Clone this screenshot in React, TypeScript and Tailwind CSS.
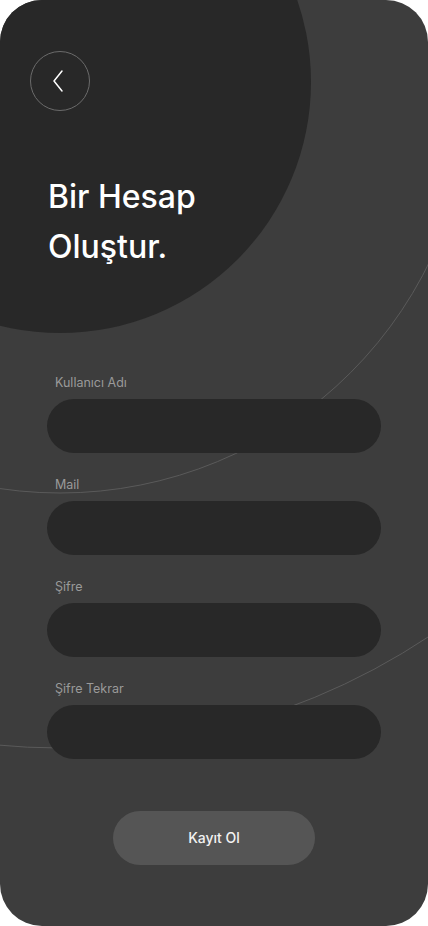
import { useState } from 'react';

const fields = [
  { label: "Kullanıcı Adı", type: "text" },
  { label: "Mail", type: "email" },
  { label: "Şifre", type: "password" },
  { label: "Şifre Tekrar", type: "password" },
];

const Backdrop = () => (
  <svg className="absolute inset-0 pointer-events-none" width="428" height="926" viewBox="0 0 428 926" fill="none">
    <circle cx="60" cy="82" r="411" stroke="#5a5a5a" strokeWidth="1" />
    <circle cx="60" cy="82" r="666" stroke="#5a5a5a" strokeWidth="1" />
    <circle cx="60" cy="82" r="251" fill="#282828" />
  </svg>
);

const App = () => {
  const [values, setValues] = useState<string[]>(fields.map(() => ""));

  return (
    <div className="min-h-screen bg-white font-['Inter','Noto_Sans',sans-serif]">
      <div className="relative w-[428px] h-[926px] overflow-hidden rounded-[42px] bg-[#3d3d3d]">
        <Backdrop />

        <div className="relative flex flex-col">
          {/* Back button */}
          <button className="ml-[30px] mt-[51px] w-[60px] h-[60px] rounded-full border border-[#6b6b6b] flex items-center justify-center">
            <svg width="14" height="24" viewBox="0 0 14 24" fill="none" className="-ml-1">
              <path d="M11 2 L3 12 L11 22" stroke="#ffffff" strokeWidth="1.5" strokeLinecap="round" strokeLinejoin="round" />
            </svg>
          </button>

          {/* Header */}
          <h1 className="ml-[48px] mt-[61px] text-[32px] leading-[50px] font-medium text-white">
            Bir Hesap
            <br />
            Oluştur.
          </h1>

          {/* Form */}
          <div className="mt-[103px] px-[47px] flex flex-col gap-6">
            {fields.map((field, index) => (
              <div key={index} className="flex flex-col gap-2">
                <label className="pl-2 text-[12.5px] leading-4 text-[#9a9a9a]">{field.label}</label>
                <input
                  type={field.type}
                  value={values[index]}
                  onChange={(e) => {
                    const next = [...values];
                    next[index] = e.target.value;
                    setValues(next);
                  }}
                  className="h-[54px] w-full rounded-full bg-[#282828] px-6 text-sm text-white outline-none"
                />
              </div>
            ))}
          </div>

          {/* CTA */}
          <button className="mx-auto mt-[52px] w-[202px] h-[54px] rounded-full bg-[#555555] text-sm font-medium text-[#f2f2f2]">
            Kayıt Ol
          </button>
        </div>
      </div>
    </div>
  );
};

export default App;
